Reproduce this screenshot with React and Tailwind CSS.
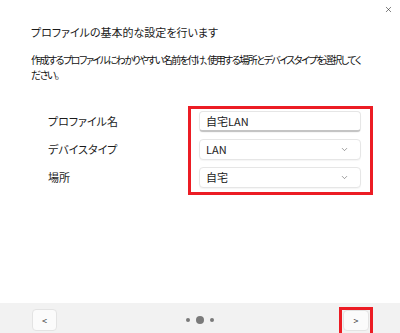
import { ChevronDown, X } from 'lucide-react';

// プロファイル作成ウィザード — 基本設定ステップ
const font = "font-['Noto_Sans_CJK_JP',_'Noto_Sans',_sans-serif] [font-feature-settings:'palt']";

function Field({ children, select, underline }) {
  return (
    <div
      className={`flex items-center h-[21px] pl-[6px] pr-[11px] bg-white rounded-[4px] border border-[#e6e6e6] shadow-[0_1px_1px_rgba(0,0,0,0.04)] text-[11px] text-[#1b1b1b] ${
        underline ? 'border-b-[2px] border-b-[#c4c4c4]' : ''
      }`}
    >
      <span className="flex-1">{children}</span>
      {select && <ChevronDown className="w-[9px] h-[9px] text-[#555]" strokeWidth={1.5} />}
    </div>
  );
}

export default function App() {
  const rows = [
    { label: 'プロファイル名', value: '自宅LAN', underline: true },
    { label: 'デバイスタイプ', value: 'LAN', select: true },
    { label: '場所', value: '自宅', select: true },
  ];

  return (
    <div className={`w-[400px] h-[333px] bg-white flex flex-col ${font} text-[#1b1b1b]`}>
      <div className="flex justify-end h-[20px] pr-[7px] pt-[5px] shrink-0">
        <X className="w-[9px] h-[9px] text-[#222]" strokeWidth={1.5} />
      </div>

      <div className="flex flex-col pl-[31px] pr-[20px] shrink-0">
        <p className="text-[11px] leading-[13px] mt-[6px]">プロファイルの基本的な設定を行います</p>
        <div className="flex flex-col mt-[14px] text-[10px] leading-[14.5px] tracking-[-1.5px] whitespace-nowrap text-[#111]">
          <span>作成するプロファイルにわかりやすい名前を付け、使用する場所とデバイスタイプを選択してく</span>
          <span>ださい。</span>
        </div>
      </div>

      <div className="flex mt-[24px] pl-[48px] shrink-0">
        <div className="flex flex-col w-[140px] pt-[5px] gap-[7px]">
          {rows.map((r) => (
            <div key={r.label} className="h-[21px] flex items-center text-[11px]">{r.label}</div>
          ))}
        </div>
        <div className="flex flex-col gap-[7px] w-[185px] border-[3px] border-[#ec1c24] pl-[8px] pr-[9px] pt-[2px] pb-[4px]">
          {rows.map((r) => (
            <Field key={r.label} select={r.select} underline={r.underline}>{r.value}</Field>
          ))}
        </div>
      </div>

      <div className="mt-auto h-[30px] shrink-0 bg-[#f2f2f2] flex items-start justify-between pt-[4px] pl-[32px] pr-[27px]">
        <button className="mt-[2px] w-[25px] h-[22px] bg-[#fbfbfb] border border-[#e3e3e3] rounded-[4px] text-[9px] text-[#333] leading-none">
          &lt;
        </button>
        <div className="flex items-center self-center gap-[6px] ml-[4px]">
          <span className="w-[4px] h-[4px] rounded-full bg-[#7a7a7a]" />
          <span className="w-[8px] h-[8px] rounded-full bg-[#7a7a7a]" />
          <span className="w-[4px] h-[4px] rounded-full bg-[#7a7a7a]" />
        </div>
        <div className="shrink-0 border-t-[3px] border-x-[3px] border-[#ec1c24] w-[34px] h-[26px] px-[1px] pb-[2px] flex">
          <button className="flex-1 bg-[#fbfbfb] border border-[#e3e3e3] rounded-[4px] text-[9px] text-[#333] leading-none">
            &gt;
          </button>
        </div>
      </div>
    </div>
  );
}
